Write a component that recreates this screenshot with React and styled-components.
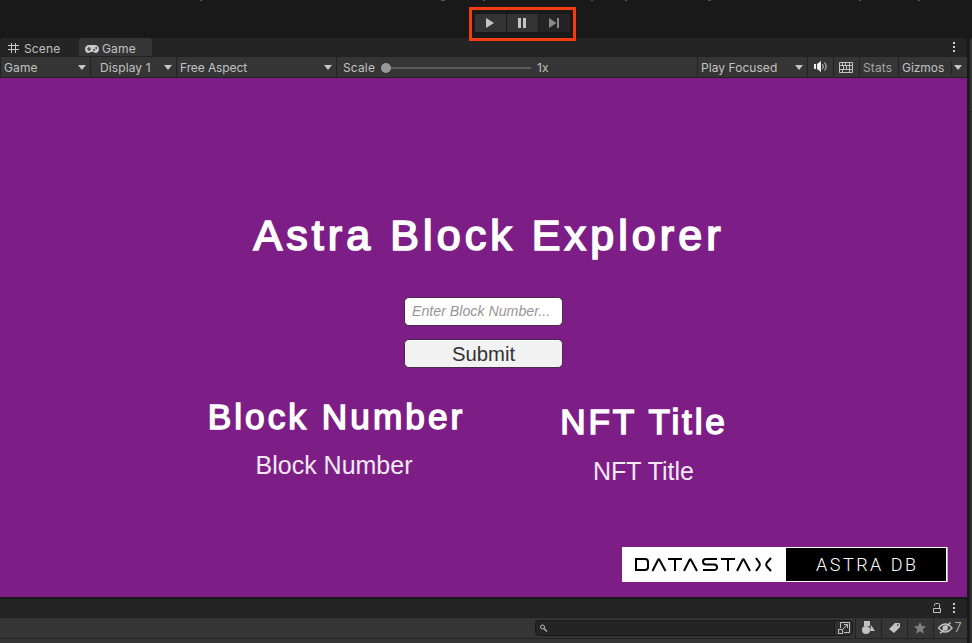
import React from "react";
import styled, { createGlobalStyle } from "styled-components";

const Global = createGlobalStyle`
  * { box-sizing: border-box; }
  body { margin: 0; background: #191919; overflow: hidden; }
  button, input { font: inherit; margin: 0; }
  svg { display: block; flex: none; }
`;

const Editor = styled.div`
  width: 972px; height: 643px; display: flex; flex-direction: column;
  background: #191919; color: #c2c2c2;
  font: 13px/18px Inter, sans-serif; overflow: hidden;
`;
const MainToolbar = styled.header`
  height: 38px; flex: none; display: flex; flex-direction: column; align-items: flex-start;
  background: #191919; position: relative; z-index: 1;
`;
const PlayControls = styled.div`
  width: 107px; height: 34px; flex: none; margin: 6px 0 0 469px; border: 3px solid #f23d13;
  padding: 4px 3px; display: flex; gap: 1px;
`;
const PlayButton = styled.button`
  width: 31px; height: 18px; border: 0; padding: 0 1px 0 0;
  display: flex; align-items: center; justify-content: center;
  background: ${(p) => (p.$dim ? "#242424" : "#333")};
  color: ${(p) => (p.$dim ? "#898989" : "#c4c4c4")};
`;
const Workspace = styled.div`
  flex: 1; min-height: 0; display: flex; gap: 2px;
`;
const Column = styled.main`
  width: 967px; display: flex; flex-direction: column;
`;
const SidePanel = styled.aside`
  flex: 1; background: linear-gradient(#353535 0 73px, #202020 73px 74px, #303030 74px);
  border-left: 1px solid #202020; border-radius: 4px 0 0 0;
`;
const TabStrip = styled.nav`
  height: 18px; flex: none; display: flex; background: #242424; border-radius: 2px 4px 0 0;
`;
const Tab = styled.div`
  height: 19px; width: ${(p) => p.$width}px; padding: 2px 0 0 ${(p) => p.$pad}px;
  display: flex; align-items: center; gap: ${(p) => p.$gap}px;
  font-size: 12px; letter-spacing: 0.15px; line-height: 17px; border-radius: 3px 3px 0 0;
  background: ${(p) => (p.$active ? "#353535" : "transparent")};
`;
const MenuSpot = styled.div`
  margin-left: auto; padding: ${(p) => p.$pad};
`;
const GameBar = styled.div`
  height: 22px; flex: none; display: flex; background: #353535;
  border-top: 1px solid #222; border-bottom: 1px solid #222; border-left: 1px solid #222;
`;
const BarCell = styled.div`
  width: ${(p) => p.$width}px; flex: none; height: 20px;
  padding: 1px ${(p) => p.$right ?? 4}px 0 ${(p) => p.$left ?? 3}px;
  display: flex; align-items: center; justify-content: space-between;
  border-right: 1px solid #222; color: ${(p) => (p.$dim ? "#a5a5a5" : "#c2c2c2")};
  font-size: 12px; letter-spacing: ${(p) => p.$spacing ?? 0.1}px; white-space: nowrap;
  &:last-child { border-right: 0; }
`;
const Caret = styled.i`
  border: 4px solid transparent; border-top: 5px solid #c6c6c6; border-bottom: 0;
`;
const ScaleCell = styled(BarCell)`
  justify-content: flex-start;
`;
const Slider = styled.div`
  width: 150px; height: 2px; margin: 0 6px 0 6px; background: #5d5d5d;
  display: flex; align-items: center;
`;
const Knob = styled.span`
  width: 10px; height: 10px; border-radius: 50%; background: #999;
`;
const Divider = styled.span`
  width: 1px; height: 13px; background: #222; margin-left: 4px;
`;

const Canvas = styled.section`
  height: 519px; flex: none; background: #7d1e87; color: #fff;
  display: flex; flex-direction: column; align-items: flex-start;
  font-family: "Liberation Sans", Arial, sans-serif;
`;
const Title = styled.h1`
  margin: 132px 0 0 253.5px; font-size: 43px; line-height: 50px; font-weight: 400;
  letter-spacing: 4.08px; -webkit-text-stroke: 1.7px #fff; white-space: nowrap;
`;
const Form = styled.form`
  margin: 37px 0 0 404px; width: 159px; display: flex; flex-direction: column; gap: 13px;
`;
const NumberInput = styled.input`
  width: 159px; height: 29px; border: 1px solid #4a2850; border-radius: 5px;
  background: #fff; padding: 0 7px 2px; outline: 0;
  font-size: 14.2px; font-style: italic; line-height: 25px;
  &::placeholder { color: #969696; opacity: 1; }
`;
const Submit = styled.button`
  width: 159px; height: 29px; border: 1px solid #4a2850; border-radius: 5px; padding: 1px 0 0;
  background: #f2f2f2; box-shadow: inset 0 1px #fff; color: #323232;
  font-size: 20.3px; line-height: 26px;
`;
const Results = styled.div`
  display: flex; align-items: flex-start; padding-left: 205px;
`;
const Result = styled.div`
  width: ${(p) => p.$width}px; margin: ${(p) => p.$margin};
  display: flex; flex-direction: column; align-items: center;
`;
const ResultHeading = styled.h2`
  margin: 0 ${(p) => p.$shift}px 0 0; font-size: 35.2px; line-height: 40px; font-weight: 400;
  letter-spacing: ${(p) => p.$spacing}px;
  -webkit-text-stroke: 1.5px #fff; white-space: nowrap;
`;
const ResultValue = styled.p`
  margin: ${(p) => p.$top}px 0 0; font-size: 25px; line-height: 28px; color: #f3e9f4; white-space: nowrap;
`;
const Brand = styled.footer`
  margin: auto 0 15px 622px; width: 326px; height: 35px; display: flex;
  background: #fff; padding: 1px 1px 1px 0; border-right: 1px solid #cda9d1;
`;
const BrandMark = styled.div`
  width: 164px; padding: 9px 0 0 12px;
`;
const BrandProduct = styled.div`
  flex: 1; background: #000; color: #fff; padding-left: 30px;
  font: 300 18px/34px Roboto, sans-serif; letter-spacing: 2.5px; white-space: nowrap;
`;

const LowerHeader = styled.div`
  height: 19px; flex: none; margin-top: 2px; background: #242424;
  border-bottom: 1px solid #1e1e1e; border-radius: 2px 4px 0 0;
  display: flex; justify-content: flex-end; align-items: flex-start;
  padding: 4px 11px 0 0; gap: 10px;
`;
const LowerBar = styled.div`
  height: 20px; flex: none; display: flex; background: #353535; padding-left: 535px;
`;
const SearchField = styled.div`
  width: 318px; height: 16px; margin: 2px 2px 0 0; flex: none;
  display: flex; justify-content: space-between;
  background: #242424; border: 1px solid #191919; border-radius: 4px;
  padding-left: 3px; overflow: hidden;
`;
const SearchAction = styled.div`
  width: 18px; height: 14px; background: #303030; border-left: 1px solid #191919; padding: 1px 0 0 3px;
`;
const ToolCell = styled.div`
  width: ${(p) => p.$width}px; flex: none; border-left: 1px solid #222;
  display: flex; align-items: center; justify-content: center; gap: 1px; padding: 0 1px 1px 0;
  font-size: 12.5px; color: #a9a9a9;
`;
const BottomEdge = styled.div`
  flex: 1; border-top: 1px solid #222; background: #353535;
`;

const Dots = () => (
  <svg width="4" height="11" fill="#cfcfcf">
    <path d="M1 0h2v2H1zM1 4h2v2H1zM1 8h2v2H1z" />
  </svg>
);
const GridIcon = () => (
  <svg width="11" height="11" stroke="#c8c8c8" fill="none">
    <path d="M3.500 0v10M7.500 0v10M0 2.500h11M0 6.500h11" />
  </svg>
);
const GamepadIcon = () => (
  <svg width="14" height="8" viewBox="0 0 14 8">
    <path d="M4 0h6c2.5 0 4 1.7 4 4s-1.3 4-3.3 4C9.400 8 8.800 6.800 7 6.800S4.600 8 3.300 8C1.300 8 0 6.300 0 4s1.500-4 4-4Z" fill="#c8c8c8" />
    <path d="M2 4h4M4 2v4" stroke="#353535" strokeWidth="1.2" />
    <circle cx="9.200" cy="5" r=".9" fill="#353535" />
    <circle cx="11.200" cy="3" r=".9" fill="#353535" />
  </svg>
);
const SpeakerIcon = () => (
  <svg width="13" height="13" viewBox="0 0 13 13">
    <path d="M0 3h2v5H0zM3 3l4-3v11L3 8z" fill="#eee" />
    <path d="M8.500 3.200q1.800 2.300 0 4.600M10.500 1.500q3.300 4 0 8" fill="none" stroke="#ddd" />
  </svg>
);
const KeyboardIcon = () => (
  <svg width="14" height="11" viewBox="0 0 14 11" fill="none" stroke="#c2c2c2">
    <path d="M.5.5h13v10H.5zM1 3.500h12M1 7.500h12M3.500 1v2.500M6.500 1v2.500M10.500 1v2.500M4.500 4v3M7.500 4v3M10.500 4v3M3.500 8v2M10.500 8v2" />
  </svg>
);
const DatastaxLogo = () => (
  <svg width="140" height="15" viewBox="0 0 140 15" fill="none" stroke="#000" strokeWidth="2" role="img" aria-label="DataStax">
    <path d="M2 2h9q3 0 3 3v5q0 3-3 3H2V1" />
    <path d="M18.500 14l5.500-11q.8-1.500 1.600 0L31.500 14" />
    <path d="M34 2h14M41 2v12" />
    <path d="M50 14l5.500-11q.8-1.500 1.600 0L63 14" />
    <path d="M83 2H72q-3 0-3 2.700t3 2.800h8q3 0 3 2.800t-3 2.700H69" />
    <path d="M87 2h14M94 2v12" />
    <path d="M103 14l5.500-11q.8-1.500 1.600 0L116 14" />
    <path d="M122 1l3.200 4.500q1.200 2 0 4L122 14M137 1l-4 4.500q-1.600 2 0 4L137 14" />
  </svg>
);

export default function App() {
  return (
    <Editor>
      <Global />
      <MainToolbar>
        <svg width="972" height="1" fill="#555">
          <path d="M200 0h2v1h-2zM441 0h4v1h-4zM483 0h2v1h-2zM591 0h2v1h-2zM625 0h2v1h-2zM708 0h3v1h-3zM859 0h2v1h-2zM918 0h2v1h-2z" />
        </svg>
        <PlayControls>
          <PlayButton aria-label="Play">
            <svg width="8" height="10"><path d="M0 0l8 5-8 5z" fill="currentColor" /></svg>
          </PlayButton>
          <PlayButton aria-label="Pause">
            <svg width="8" height="10"><path d="M0 0h3v10H0zM5 0h3v10H5z" fill="currentColor" /></svg>
          </PlayButton>
          <PlayButton $dim aria-label="Step">
            <svg width="10" height="10"><path d="M0 0l7.500 5-7.500 5zM8 0h2v10H8z" fill="currentColor" /></svg>
          </PlayButton>
        </PlayControls>
      </MainToolbar>
      <Workspace>
        <Column>
          <TabStrip>
            <Tab $width={79} $pad={8} $gap={5}><GridIcon />Scene</Tab>
            <Tab $active $width={73} $pad={6} $gap={3}><GamepadIcon />Game</Tab>
            <MenuSpot $pad="4px 11px 0 0"><Dots /></MenuSpot>
          </TabStrip>
          <GameBar>
            <BarCell $width={90}>Game<Caret /></BarCell>
            <BarCell $width={86} $left={9}>Display 1<Caret /></BarCell>
            <BarCell $width={160} $spacing={-0.1}>Free Aspect<Caret /></BarCell>
            <ScaleCell $width={361} $left={6} $spacing={0.15}>
              Scale<Slider><Knob /></Slider>1x
            </ScaleCell>
            <BarCell $width={110} $spacing={0.05}>Play Focused<Caret /></BarCell>
            <BarCell $width={26} $left={6}><SpeakerIcon /></BarCell>
            <BarCell $width={26} $left={5}><KeyboardIcon /></BarCell>
            <BarCell $width={39} $dim>Stats</BarCell>
            <BarCell $width={68} $left={3} $right={5} $spacing={-0.05}>Gizmos<Divider /><Caret /></BarCell>
          </GameBar>
          <Canvas>
            <Title>Astra Block Explorer</Title>
            <Form>
              <NumberInput placeholder="Enter Block Number..." />
              <Submit type="button">Submit</Submit>
            </Form>
            <Results>
              <Result $width={258} $margin="29px 0 0 0">
                <ResultHeading $spacing={3.05} $shift={-5}>Block Number</ResultHeading>
                <ResultValue $top={14}>Block Number</ResultValue>
              </Result>
              <Result $width={173} $margin="34px 0 0 94px">
                <ResultHeading $spacing={2.8} $shift={-1}>NFT Title</ResultHeading>
                <ResultValue $top={15}>NFT Title</ResultValue>
              </Result>
            </Results>
            <Brand>
              <BrandMark><DatastaxLogo /></BrandMark>
              <BrandProduct>ASTRA DB</BrandProduct>
            </Brand>
          </Canvas>
          <LowerHeader>
            <svg width="9" height="11" fill="none" stroke="#c2c2c2"><path d="M.5 5.500h7v4h-7zM1.500 3V1.500q0-1 1-1h3q1 0 1 1v4" /></svg>
            <Dots />
          </LowerHeader>
          <LowerBar>
            <SearchField>
              <svg width="9" height="13" fill="none" stroke="#bbb"><circle cx="3.500" cy="6" r="2" /><path d="M5 7.500l3 3" strokeWidth="1.300" /></svg>
              <SearchAction>
                <svg width="12" height="12" fill="none" stroke="#c2c2c2"><path d="M2.500 6V.5h9v10H6M.5 7.500h4v4h-4zM5 7l4-4M6 2.500h3.500V6" /></svg>
              </SearchAction>
            </SearchField>
            <ToolCell $width={26}>
              <svg width="13" height="13" fill="#c2c2c2"><path d="M2 0h6v5H2zM9 4l4 6H8z" /><circle cx="4" cy="9" r="4" /></svg>
            </ToolCell>
            <ToolCell $width={26}>
              <svg width="11" height="11" fill="#c2c2c2"><path fillRule="evenodd" d="M6 1h4q1 0 1 1v3l-6 6-5-4zM8 2.200v1.500h1.500V2.200z" /></svg>
            </ToolCell>
            <ToolCell $width={26}>
              <svg width="12" height="12" viewBox="0 0 12 12" fill="#808080"><path d="M6 0l1.800 4 4.200.4-3.200 2.800 1 4.500L6 9.300l-3.800 2.400 1-4.500L0 4.400 4.200 4z" /></svg>
            </ToolCell>
            <ToolCell $width={34}>
              <svg width="15" height="12" fill="none" stroke="#c2c2c2" strokeWidth="1.4"><path d="M.5 6q7-8 13.500 0-6.500 8-13.500 0zM2 11.500L12.500.5" /><circle cx="7.200" cy="6" r="2" fill="#c2c2c2" /></svg>
              7
            </ToolCell>
          </LowerBar>
          <BottomEdge />
        </Column>
        <SidePanel />
      </Workspace>
    </Editor>
  );
}
